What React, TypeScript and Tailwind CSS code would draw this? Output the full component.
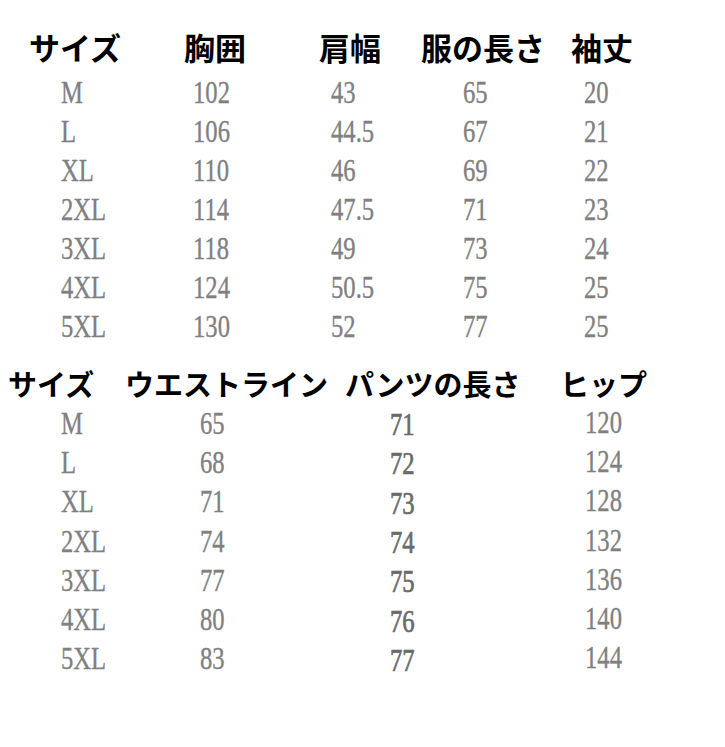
const topHeads = [
  { label: "サイズ", w: "w-[155px]" },
  { label: "胸囲", w: "w-[135px]" },
  { label: "肩幅", w: "w-[102px]" },
  { label: "服の長さ", w: "w-[150px]" },
  { label: "袖丈", w: "w-[100px]" },
];

const topCols = ["w-[132px]", "w-[138px]", "w-[132px]", "w-[121px]", "w-[60px]"];

const topRows = [
  ["M", "102", "43", "65", "20"],
  ["L", "106", "44.5", "67", "21"],
  ["XL", "110", "46", "69", "22"],
  ["2XL", "114", "47.5", "71", "23"],
  ["3XL", "118", "49", "73", "24"],
  ["4XL", "124", "50.5", "75", "25"],
  ["5XL", "130", "52", "77", "25"],
];

const bottomHeads = [
  { label: "サイズ", w: "w-[117px]" },
  { label: "ウエストライン", w: "w-[220px]" },
  { label: "パンツの長さ", w: "w-[215px]" },
  { label: "ヒップ", w: "w-[120px]" },
];

const bottomCols = ["w-[139px]", "w-[190px]", "w-[195px]", "w-[80px]"];

const bottomRows = [
  ["M", "65", "71", "120"],
  ["L", "68", "72", "124"],
  ["XL", "71", "73", "128"],
  ["2XL", "74", "74", "132"],
  ["3XL", "77", "75", "136"],
  ["4XL", "80", "76", "140"],
  ["5XL", "83", "77", "144"],
];

function Num({ children, dark }: { children: string; dark?: boolean }) {
  return (
    <span
      className={`inline-block origin-left scale-x-[0.77] font-['Liberation_Serif',serif] text-[32px] leading-[30px] ${
        dark ? "text-[#6a6a6a] [-webkit-text-stroke:0.7px_#6a6a6a]" : "text-[#808080] [-webkit-text-stroke:0.35px_#808080]"
      }`}
    >
      {children}
    </span>
  );
}

export default function App() {
  return (
    <div className="w-[725px] h-[747px] bg-white overflow-hidden">
      {/* Top table */}
      <div className="pt-[31px]">
        <div className="flex h-[32px] items-center pl-[29px] font-['Noto_Sans_CJK_JP',sans-serif] text-[31px] font-bold text-black">
          {topHeads.map((h) => (
            <div key={h.label} className={`${h.w} shrink-0 leading-[32px] whitespace-nowrap`}>
              {h.label}
            </div>
          ))}
        </div>
        <div className="mt-[10px]">
          {topRows.map((row, i) => (
            <div key={i} className="flex h-[39px] items-center pl-[61px]">
              {row.map((v, j) => (
                <div key={j} className={`${topCols[j]} shrink-0`}>
                  <Num>{v}</Num>
                </div>
              ))}
            </div>
          ))}
        </div>
      </div>

      {/* Bottom table */}
      <div className="pt-[21px]">
        <div className="flex h-[32px] items-center pl-[8px] font-['Noto_Sans_CJK_JP',sans-serif] text-[29px] font-bold text-black">
          {bottomHeads.map((h) => (
            <div key={h.label} className={`${h.w} shrink-0 leading-[32px] whitespace-nowrap`}>
              {h.label}
            </div>
          ))}
        </div>
        <div className="mt-[5px]">
          {bottomRows.map((row, i) => (
            <div key={i} className="flex h-[39.3px] items-center pl-[61px]">
              {row.map((v, j) => (
                <div key={j} className={`${bottomCols[j]} shrink-0 ${j === 2 ? "pt-[3px]" : j === 3 ? "pb-[2px]" : ""}`}>
                  <Num dark={j === 2}>{v}</Num>
                </div>
              ))}
            </div>
          ))}
        </div>
      </div>
    </div>
  );
}
